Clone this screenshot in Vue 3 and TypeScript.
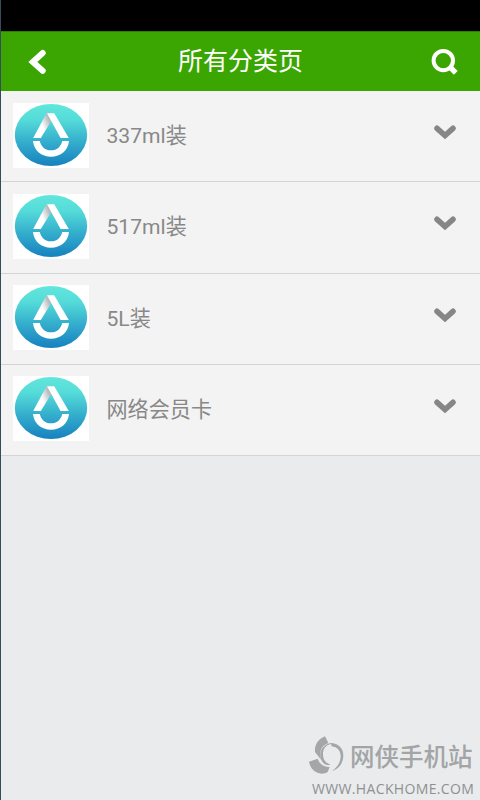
<script setup lang="ts">
interface Category {
  id: number
  name: string
}

const title: string = '所有分类页'
const categories: Category[] = [
  { id: 1, name: '337ml装' },
  { id: 2, name: '517ml装' },
  { id: 3, name: '5L装' },
  { id: 4, name: '网络会员卡' },
]
</script>

<template>
  <div class="screen">
    <div class="status-bar"></div>
    <header class="header">
      <svg class="back" viewBox="0 0 20 26" aria-hidden="true">
        <path d="M15.7 4 5.8 12.9 15.7 21.8" />
      </svg>
      <h1 class="title">{{ title }}</h1>
      <svg class="search" viewBox="0 0 28 28" aria-hidden="true">
        <circle cx="12.3" cy="12.6" r="9.7" />
        <path d="m18.8 18.8 6 6" />
      </svg>
    </header>

    <ul class="list">
      <li v-for="item in categories" :key="item.id" class="row">
        <svg class="logo" viewBox="0 0 76 65" aria-hidden="true">
          <defs>
            <linearGradient :id="`water-${item.id}`" x1="0" y1="0" x2="0" y2="1">
              <stop offset="0" stop-color="#62e6dc" />
              <stop offset="0.25" stop-color="#55dcd9" />
              <stop offset="0.6" stop-color="#35afcd" />
              <stop offset="1" stop-color="#1681bf" />
            </linearGradient>
            <linearGradient :id="`fold-${item.id}`" x1="0.9" y1="0.25" x2="0.5" y2="0.5">
              <stop offset="0" stop-color="#b4b9bc" />
              <stop offset="1" stop-color="#fff" />
            </linearGradient>
          </defs>
          <rect width="76" height="65" fill="#fff" />
          <ellipse cx="38" cy="32" rx="36.2" ry="31" :fill="`url(#water-${item.id})`" />
          <path d="M33.5 10.3h4.5v8.200L27.800 35h-7.600z" :fill="`url(#fold-${item.id})`" />
          <path d="M34 10.3h7.200L55.800 35h-8.200z" fill="#fff" />
          <path d="M20 38h6.800c1.500 6.100 5.400 9.300 11.200 9.300s9.800-3.200 11.200-9.300H56c-1 9.600-8.300 15.700-18 15.700S21 47.600 20 38z" fill="#fff" />
        </svg>
        <span class="name">{{ item.name }}</span>
        <svg class="chevron" viewBox="0 0 22 15" aria-hidden="true">
          <path d="m3 3.3 8 7.2 8-7.2" />
        </svg>
      </li>
    </ul>

    <footer class="brand">
      <div class="brand-top">
        <svg class="brand-mark" viewBox="28 18 108 114" aria-hidden="true">
          <path d="M76 19C56 27 44 44 46 66L64 89C57 64 65 47 86 39z" />
          <path d="M94 42C77 45 69 58 70 76c1 15 10 25 23 27l-8 3C69 103 60 87 62 71 64 54 77 42 94 39z" />
          <path d="M93 39c22 0 38 15 38 37 0 25-15 42-34 47 12-8 26-23 26-45 0-15-10-27-27-29z" />
          <path d="M28 95 54 86c6 17 18 25 36 25l-6 15c-10 6-22 7-34 1-12-6-19-17-22-32z" />
        </svg>
        <span class="brand-name">网侠手机站</span>
      </div>
      <div class="brand-url">WWW.HACKHOME.COM</div>
    </footer>
  </div>
</template>

<style>
body {
  margin: 0;
}
</style>

<style scoped>
.screen {
  box-sizing: border-box;
  display: flex;
  flex-direction: column;
  width: 480px;
  height: 800px;
  overflow: hidden;
  border-left: 1px solid #344d5d;
  background: #e9ebed;
  font-family: Roboto, "Noto Sans CJK SC", sans-serif;
}

.status-bar {
  flex: none;
  height: 31px;
  background: #000;
}

.header {
  box-sizing: border-box;
  display: grid;
  grid-template-columns: 60px 1fr 60px;
  align-items: center;
  flex: none;
  height: 60px;
  border-top: 1px solid #2c8206;
  background: #3ba502;
}

.back {
  width: 20px;
  height: 26px;
  margin: 1px 0 0 26px;
  fill: none;
  stroke: #fff;
  stroke-width: 6;
  stroke-linecap: round;
}

.title {
  margin: 0;
  padding-top: 1px;
  color: #fff;
  font-size: 25px;
  font-weight: 400;
  line-height: 36px;
  text-align: center;
}

.search {
  width: 28px;
  height: 28px;
  margin-left: 11px;
  fill: none;
  stroke: #fff;
  stroke-width: 4;
}

.search path {
  stroke-width: 5.4;
}

.list {
  display: grid;
  grid-template-rows: repeat(4, 91.25px);
  flex: none;
  margin: 0;
  padding: 0;
  list-style: none;
}

.row {
  box-sizing: border-box;
  display: flex;
  align-items: center;
  padding: 0 24px 2px 12px;
  border-bottom: 1.5px solid #d3d4d5;
  background: #f3f3f3;
}

.logo {
  flex: none;
  width: 76px;
  height: 65px;
}

.name {
  flex: 1;
  margin-left: 17.5px;
  padding-top: 2px;
  color: #888;
  font-size: 21.1px;
  line-height: 30px;
}

.chevron {
  width: 22px;
  height: 15px;
  margin-bottom: 5px;
  fill: none;
  stroke: #868686;
  stroke-width: 5.6;
  stroke-linecap: round;
}

.brand {
  align-self: flex-end;
  width: 171px;
  margin-top: auto;
  color: #a2a4a6;
}

.brand-top {
  display: flex;
  align-items: center;
  height: 40px;
}

.brand-mark {
  width: 36px;
  height: 38px;
  fill: #a4a6a8;
}

.brand-name {
  margin-left: 5px;
  padding-top: 5px;
  font-size: 24.5px;
  font-weight: 500;
  line-height: 36px;
  white-space: nowrap;
}

.brand-url {
  padding: 4px 0 1px 3px;
  color: #8e9092;
  font-family: "Open Sans", sans-serif;
  font-size: 14px;
  line-height: 20px;
  letter-spacing: 0.35px;
  white-space: nowrap;
}
</style>
